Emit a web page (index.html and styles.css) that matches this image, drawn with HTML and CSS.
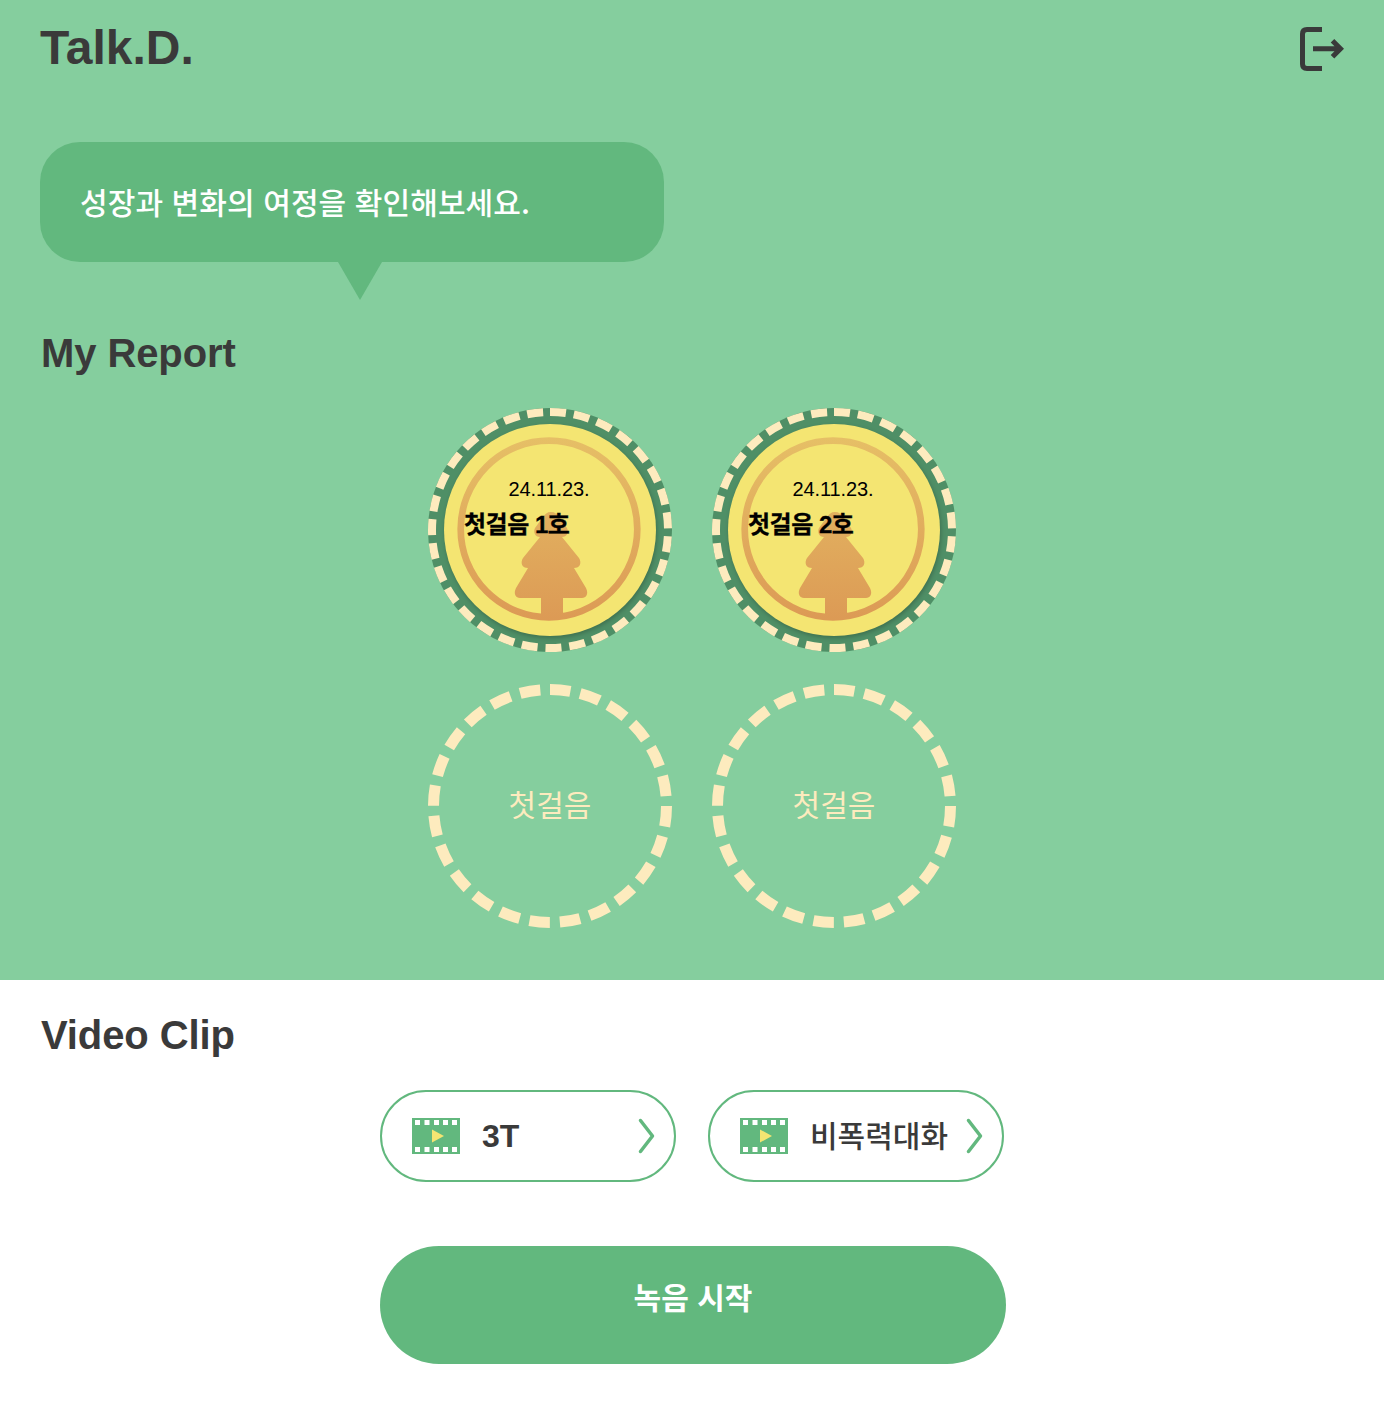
FILE: index.html
```html
<!DOCTYPE html>
<html lang="ko">
<head>
<meta charset="utf-8">
<title>Talk.D.</title>
<link rel="stylesheet" href="styles.css">
</head>
<body>
<svg class="defs" width="0" height="0" aria-hidden="true">
  <defs>
    <linearGradient id="gold" gradientUnits="userSpaceOnUse" x1="0" y1="30" x2="0" y2="212">
      <stop offset="0" stop-color="#e6bf66"/>
      <stop offset="1" stop-color="#dc9a55"/>
    </linearGradient>
    <symbol id="coin" viewBox="0 0 244 244">
      <circle cx="122" cy="122" r="122" fill="#4f8f66"/>
      <circle cx="122" cy="122" r="118" fill="none" stroke="#fdebbe" stroke-width="8" stroke-dasharray="16 7.94" transform="rotate(-90 122 122)"/>
      <circle class="coin-face" cx="122" cy="122" r="106" fill="#f4e572"/>
      <circle cx="121" cy="121" r="88.3" fill="none" stroke="url(#gold)" stroke-width="6.7"/>
      <path d="M123 104 C127 104 129 106 131 109 L139 120 C141 124 139 129 134 129 L151 150 C154 155 152 160 146 160 L158 180 C161 186 158 190 154 190 L135 190 L135 209 L113 209 L113 190 L92 190 C88 190 85 186 88 180 L100 160 C94 160 92 155 95 150 L112 129 C107 129 105 124 107 120 L115 109 C117 106 119 104 123 104 Z" fill="url(#gold)"/>
    </symbol>
    <symbol id="film" viewBox="0 0 48 36">
      <rect width="48" height="36" fill="#62b87e"/>
      <path d="M3 2h5v5H3zM12.500 2h5v5h-5zM22 2h5v5h-5zM31 2h5v5h-5zM40 2h5v5h-5zM3 29h5v5H3zM12.500 29h5v5h-5zM22 29h5v5h-5zM31 29h5v5h-5zM40 29h5v5h-5z" fill="#fff"/>
      <path d="M20 11.500 32 18 20 24.500Z" fill="#f4e572"/>
    </symbol>
    <symbol id="chevron" viewBox="0 0 18 36">
      <path d="M2.500 2.500 14.500 18 2.500 33.500" fill="none" stroke="#62b87e" stroke-width="3.500" stroke-linecap="round" stroke-linejoin="round"/>
    </symbol>
  </defs>
</svg>

<main class="page">
  <section class="hero">
    <header class="topbar">
      <h1 class="brand">Talk.D.</h1>
      <button class="logout" type="button" aria-label="로그아웃">
        <svg width="46" height="46" viewBox="0 0 46 46" aria-hidden="true">
          <path d="M24 3.500H9Q4.500 3.500 4.500 8V38Q4.500 42.500 9 42.500H24M15 22.800H42.500M34.500 14.800L42.500 22.800L34.500 30.800" fill="none" stroke="#3a3a3a" stroke-width="5"/>
        </svg>
      </button>
    </header>

    <div class="bubble">성장과 변화의 여정을 확인해보세요.</div>

    <h2 class="section-title">My Report</h2>

    <div class="badges">
      <article class="badge">
        <svg class="badge-art" width="244" height="244" aria-hidden="true"><use href="#coin"/></svg>
        <div class="badge-text">
          <div class="badge-date">24.11.23.</div>
          <div class="badge-name">첫걸음 1호</div>
        </div>
      </article>
      <article class="badge">
        <svg class="badge-art" width="244" height="244" aria-hidden="true"><use href="#coin"/></svg>
        <div class="badge-text">
          <div class="badge-date">24.11.23.</div>
          <div class="badge-name">첫걸음 2호</div>
        </div>
      </article>
      <article class="badge badge-empty">
        <svg class="badge-art" width="244" height="244" viewBox="0 0 244 244" aria-hidden="true">
          <circle cx="122" cy="122" r="116.500" fill="none" stroke="#fdebbe" stroke-width="11" stroke-dasharray="20.500 10" transform="rotate(-90 122 122)"/>
        </svg>
        <span class="empty-label">첫걸음</span>
      </article>
      <article class="badge badge-empty">
        <svg class="badge-art" width="244" height="244" viewBox="0 0 244 244" aria-hidden="true">
          <circle cx="122" cy="122" r="116.500" fill="none" stroke="#fdebbe" stroke-width="11" stroke-dasharray="20.500 10" transform="rotate(-90 122 122)"/>
        </svg>
        <span class="empty-label">첫걸음</span>
      </article>
    </div>
  </section>

  <section class="clips">
    <h2 class="section-title clips-title">Video Clip</h2>
    <div class="clip-row">
      <a class="clip" href="#">
        <svg class="clip-film" width="48" height="36" aria-hidden="true"><use href="#film"/></svg>
        <span class="clip-label">3T</span>
        <svg class="clip-chevron" width="18" height="36" aria-hidden="true"><use href="#chevron"/></svg>
      </a>
      <a class="clip" href="#">
        <svg class="clip-film" width="48" height="36" aria-hidden="true"><use href="#film"/></svg>
        <span class="clip-label clip-label-ko">비폭력대화</span>
        <svg class="clip-chevron" width="18" height="36" aria-hidden="true"><use href="#chevron"/></svg>
      </a>
    </div>
    <button class="record" type="button">녹음 시작</button>
  </section>
</main>
</body>
</html>
```
FILE: styles.css
```css
* { box-sizing: border-box; }
html, body { margin: 0; padding: 0; background: #fff; }
body {
  font-family: "Liberation Sans", "Noto Sans CJK KR", sans-serif;
  color: #3a3a3a;
}
.defs { display: block; height: 0; }
.page { width: 1384px; height: 1426px; overflow: hidden; }

.hero {
  height: 980px;
  background: #85ce9e;
  padding: 0 40px;
}
.topbar {
  height: 96px;
  display: flex;
  justify-content: space-between;
  align-items: flex-start;
}
.brand {
  margin: 20px 0 0;
  font-size: 48px;
  line-height: 56px;
  font-weight: 700;
}
.logout {
  margin: 26px 0 0;
  padding: 0;
  border: 0;
  background: none;
  display: block;
  line-height: 0;
}

.bubble {
  position: relative;
  width: 624px;
  height: 120px;
  margin-top: 46px;
  padding: 0 40px;
  border-radius: 40px;
  background: #62b87e;
  color: #fff;
  font-family: "Noto Sans CJK KR", sans-serif;
  font-size: 30px;
  font-weight: 500;
  line-height: 118px;
  letter-spacing: 0.1px;
  white-space: nowrap;
}
.bubble::after {
  content: "";
  position: absolute;
  left: 298px;
  top: 120px;
  border-style: solid;
  border-width: 38px 22px 0;
  border-color: #62b87e transparent transparent;
}

.section-title {
  margin: 0 0 0 1px;
  font-size: 40px;
  line-height: 48px;
  font-weight: 700;
  letter-spacing: -0.1px;
}
.hero .section-title { margin-top: 67px; }

.badges {
  display: grid;
  grid-template-columns: 244px 244px;
  justify-content: center;
  gap: 32px 40px;
  margin-top: 31px;
}
.badge {
  position: relative;
  width: 244px;
  height: 244px;
}
.badge-art { position: absolute; left: 0; top: 0; display: block; }
.coin-face { filter: drop-shadow(1px 2px 2px rgba(0, 0, 0, .22)); }
.badge-text { position: relative; padding-top: 69px; }
.badge-date {
  width: 242px;
  text-align: center;
  font-size: 20px;
  line-height: 24px;
  letter-spacing: -0.1px;
  color: #000;
}
.badge-name {
  margin: 9px 0 0 36px;
  font-size: 24px;
  line-height: 30px;
  font-weight: 700;
  letter-spacing: -0.5px;
  color: #000;
  -webkit-text-stroke: 0.3px #000;
  white-space: nowrap;
}
.badge-empty {
  display: flex;
  align-items: center;
  justify-content: center;
}
.empty-label {
  position: relative;
  font-size: 30px;
  line-height: 36px;
  color: #fdebbe;
}

.clips { padding: 0 40px; position: relative; }
.clips-title { padding-top: 31px; }
.clip-row {
  display: flex;
  gap: 32px;
  margin-top: 31px;
  padding-left: 340px;
}
.clip {
  width: 296px;
  height: 92px;
  display: flex;
  align-items: center;
  padding: 0 18px 0 30px;
  border: 2px solid #62b87e;
  border-radius: 46px;
  background: #fff;
  color: #3a3a3a;
  text-decoration: none;
}
.clip-film { flex: none; display: block; }
.clip-label {
  flex: 1;
  margin-left: 22px;
  font-size: 32px;
  font-weight: 700;
  line-height: 40px;
  white-space: nowrap;
}
.clip-label-ko {
  font-family: "Noto Sans CJK KR", sans-serif;
  font-size: 30px;
  font-weight: 500;
  padding-bottom: 4px;
}
.clip-chevron { flex: none; display: block; }

.record {
  display: block;
  width: 626px;
  height: 118px;
  margin: 64px 0 0 340px;
  padding: 0 0 18px;
  border: 0;
  border-radius: 59px;
  background: #62b87e;
  color: #fff;
  font-family: "Noto Sans CJK KR", sans-serif;
  font-size: 30px;
  font-weight: 700;
}
```
